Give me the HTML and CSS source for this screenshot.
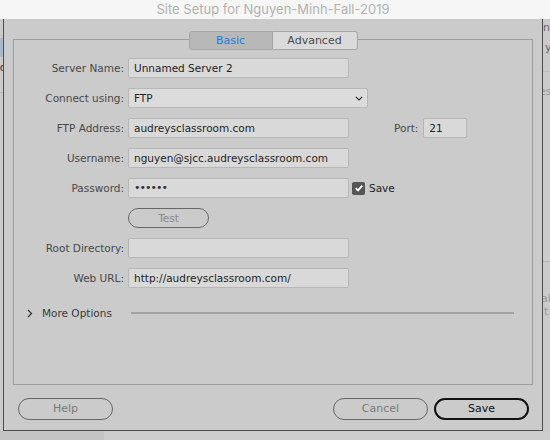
FILE: index.html
```html
<!DOCTYPE html>
<html>
<head>
<meta charset="utf-8">
<title>Site Setup</title>
<link rel="stylesheet" href="styles.css">
</head>
<body>
<div class="titlebar">Site Setup for Nguyen-Minh-Fall-2019</div>
<div class="stage">
  <div class="side side-left">
    <div class="sel-strip"></div>
    <div class="frag frag-left">od</div>
    <div class="side-rule"></div>
  </div>
  <div class="sheet">
    <div class="panel">
      <div class="tabs">
        <div class="tab tab-on">Basic</div>
        <div class="tab">Advanced</div>
      </div>
      <div class="form">
        <div class="label">Server Name:</div>
        <div class="field"><div class="input w220">Unnamed Server 2</div></div>

        <div class="label">Connect using:</div>
        <div class="field">
          <div class="input select">
            <span>FTP</span>
            <svg class="chev" width="8" height="5" viewBox="0 0 8 5"><path d="M0.8 0.8 L4 4 L7.2 0.8" fill="none" stroke="#333" stroke-width="1.2"/></svg>
          </div>
        </div>

        <div class="label">FTP Address:</div>
        <div class="field">
          <div class="input w220">audreysclassroom.com</div>
          <span class="port-label">Port:</span>
          <div class="input port">21</div>
        </div>

        <div class="label">Username:</div>
        <div class="field"><div class="input w220">nguyen@sjcc.audreysclassroom.com</div></div>

        <div class="label">Password:</div>
        <div class="field">
          <div class="input w220 dots">••••••</div>
          <span class="check"><svg width="12" height="12" viewBox="0 0 12 12"><path d="M2.8 6.2 L5 8.4 L9.3 3.6" fill="none" stroke="#fff" stroke-width="1.8"/></svg></span>
          <span class="check-label">Save</span>
        </div>

        <div class="label"></div>
        <div class="field"><div class="pill test">Test</div></div>

        <div class="label">Root Directory:</div>
        <div class="field"><div class="input w220"></div></div>

        <div class="label">Web URL:</div>
        <div class="field"><div class="input w220">http://audreysclassroom.com/</div></div>
      </div>
      <div class="more">
        <svg class="more-arrow" width="6" height="9" viewBox="0 0 6 9"><path d="M1 1 L4.5 4.5 L1 8" fill="none" stroke="#333" stroke-width="1.2"/></svg>
        <span class="more-text">More Options</span>
        <span class="more-line"></span>
      </div>
    </div>
    <div class="buttons">
      <div class="pill btn">Help</div>
      <div class="spacer"></div>
      <div class="pill btn">Cancel</div>
      <div class="pill btn primary">Save</div>
    </div>
  </div>
  <div class="side side-right">
    <div class="frag frag-r1">ne</div>
    <div class="frag frag-r2">y</div>
    <div class="side-rule r-rule"></div>
    <div class="frag frag-r3">es</div>
    <div class="r-lower">
      <div class="frag frag-r4">ab</div>
      <div class="frag frag-r5">t</div>
    </div>
  </div>
</div>
<div class="below"><div class="below-left"></div><div class="below-right"></div></div>
</body>
</html>
```

FILE: styles.css
```css
* { box-sizing: border-box; }

html, body {
  margin: 0;
  padding: 0;
}

body {
  width: 550px;
  height: 440px;
  overflow: hidden;
  background: #cbcbcb;
  font-family: "DejaVu Sans", "Liberation Sans", sans-serif;
  font-size: 10.5px;
  color: #222;
}

.titlebar {
  height: 19px;
  background: #f6f6f6;
  color: #b2b2b2;
  font-family: Inter, "Liberation Sans", sans-serif;
  font-size: 13px;
  line-height: 19px;
  text-align: center;
  padding-right: 4px;
}

.stage {
  display: flex;
  height: 412px;
}

.side {
  background: #cbcbcb;
  overflow: hidden;
  position: relative;
  display: flex;
  flex-direction: column;
}

.side-left { width: 3px; }
.side-right { width: 7px; }

.sel-strip {
  margin-top: 19px;
  height: 19px;
  background: #a9b8cf;
}

.frag {
  font-family: "DejaVu Sans", sans-serif;
  font-size: 11px;
  line-height: 13px;
  white-space: nowrap;
  color: #555;
}

.frag-left {
  margin-top: 4px;
  margin-left: -7px;
  color: #333;
}

.side-rule {
  height: 1px;
  margin-top: 18px;
  background: #b9b9b9;
}

.frag-r1 { margin-top: 2px; color: #666; }
.frag-r2 { margin-top: 7px; margin-left: 2px; color: #666; }
.r-rule { margin-top: 17px; background: #bdbdbd; }
.frag-r3 { margin-top: 13px; margin-left: -4px; color: #999; }
.r-lower {
  margin-top: 163px;
  border-top: 1px solid #b5b5b5;
  flex: 1;
  padding-top: 30px;
}
.frag-r4 { color: #999; margin-left: -2px; }
.frag-r5 { color: #999; margin-left: 1px; }

.sheet {
  width: 540px;
  border-left: 1px solid #4d4d4d;
  border-right: 1px solid #4d4d4d;
  border-bottom: 1px solid #4d4d4d;
  background: #cbcbcb;
  display: flex;
  flex-direction: column;
}

.panel {
  margin: 20px 9px 0 9px;
  height: 346px;
  border: 1px solid #9d9d9d;
  display: flex;
  flex-direction: column;
}

.tabs {
  display: flex;
  justify-content: center;
  margin-top: -9px;
  height: 19px;
}

.tab {
  width: 84px;
  height: 19px;
  line-height: 17px;
  text-align: center;
  border: 1px solid #a6a6a6;
  background: #dadada;
  color: #4a4a4a;
  font-size: 11px;
}

.tab + .tab {
  border-left: none;
  border-radius: 0 3px 3px 0;
  width: 85px;
}

.tab-on {
  background: #b8b8b8;
  color: #1a7be0;
  border-radius: 3px 0 0 3px;
}

.form {
  margin-top: 8px;
  display: grid;
  grid-template-columns: 110px 1fr;
  column-gap: 4px;
  row-gap: 10px;
  grid-auto-rows: 20px;
}

.label {
  text-align: right;
  line-height: 20px;
  color: #484848;
  white-space: nowrap;
}

.field {
  display: flex;
  align-items: center;
}

.input {
  height: 20px;
  border: 1px solid #b7b7b7;
  border-radius: 2px;
  background: #d9d9d9;
  line-height: 18px;
  padding: 0 5px;
  color: #1e1e1e;
  white-space: nowrap;
  overflow: hidden;
}

.w220 { width: 221px; }

.select {
  width: 240px;
  display: flex;
  align-items: center;
  justify-content: space-between;
  background: #dcdcdc;
  padding-right: 4px;
}

.chev { display: block; }

.port-label {
  margin-left: 45px;
  color: #484848;
}

.port {
  margin-left: 5px;
  width: 44px;
}

.dots {
  font-size: 11px;
  letter-spacing: -1px;
  color: #333;
}

.check {
  margin-left: 3px;
  width: 13px;
  height: 13px;
  border-radius: 2px;
  background: #555;
  display: flex;
  align-items: center;
  justify-content: center;
}

.check svg { display: block; }

.check-label {
  margin-left: 4px;
  color: #222;
}

.pill {
  border: 1px solid #676767;
  border-radius: 11px;
  text-align: center;
  color: #8a8a8a;
}

.test {
  width: 81px;
  height: 20px;
  line-height: 18px;
  border-radius: 10px;
}

.more {
  margin-top: 17px;
  height: 16px;
  display: flex;
  align-items: center;
  padding-left: 13px;
  padding-right: 18px;
}

.more-arrow { display: block; }

.more-text {
  margin-left: 9px;
  color: #3a3a3a;
  white-space: nowrap;
}

.more-line {
  flex: 1;
  height: 2px;
  margin-left: 19px;
  background: #a3a3a3;
}

.buttons {
  margin-top: 13px;
  display: flex;
  height: 22px;
  padding: 0 13px 0 14px;
  gap: 6px;
}

.spacer { flex: 1; }

.btn {
  width: 95px;
  height: 22px;
  line-height: 20px;
  font-size: 11px;
  color: #7a7a7a;
}

.primary {
  border: 2px solid #111;
  line-height: 18px;
  color: #111;
}

.below {
  display: flex;
  height: 9px;
}

.below-left {
  width: 104px;
  background: #c4c4c4;
}

.below-right {
  flex: 1;
  background: #cdcdcd;
}
```
